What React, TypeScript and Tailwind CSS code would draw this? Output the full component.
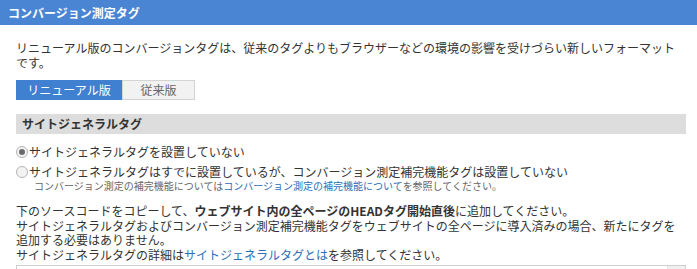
import { useState } from 'react'

const FONT = { fontFamily: '"Noto Sans CJK JP", "Noto Sans", sans-serif' }

export default function App() {
  const [tab, setTab] = useState<'new' | 'old'>('new')
  const [site, setSite] = useState<'none' | 'done'>('none')

  return (
    <div className="w-[697px] h-[269px] overflow-hidden bg-white text-[#333] text-[12px]" style={FONT}>
      <div className="h-[25px] bg-[#4a85d3] flex items-center pl-2">
        <h1 className="text-white font-bold text-[12px] leading-none">コンバージョン測定タグ</h1>
      </div>

      <div className="pl-4 pr-[11px]">
        <p className="mt-[15px] leading-[15px]">
          リニューアル版のコンバージョンタグは、従来のタグよりもブラウザーなどの環境の影響を受けづらい新しいフォーマットです。
        </p>

        <div className="mt-[10px] flex h-[20px]">
          <button
            onClick={() => setTab('new')}
            className={`w-[106px] text-[12px] leading-none ${tab === 'new' ? 'bg-[#3f80d1] text-white' : 'bg-[#f2f2f2] text-[#666] border border-[#d4d4d4]'}`}
          >
            リニューアル版
          </button>
          <button
            onClick={() => setTab('old')}
            className={`w-[73px] text-[12px] leading-none ${tab === 'old' ? 'bg-[#3f80d1] text-white' : 'bg-[#f2f2f2] text-[#666] border border-[#d4d4d4]'}`}
          >
            従来版
          </button>
        </div>

        <div className="mt-[14px] h-[20px] bg-[#dddddd] flex items-center pl-[6px]">
          <h2 className="font-bold text-[12px] leading-none">サイトジェネラルタグ</h2>
        </div>

        <div className="mt-[8px]">
          <label className="flex items-center h-[20px] cursor-pointer" onClick={() => setSite('none')}>
            <span className="w-[12px] h-[12px] rounded-full border border-[#b5b5b5] bg-[#f3f3f3] flex items-center justify-center">
              {site === 'none' && <span className="w-[6px] h-[6px] rounded-full bg-[#6b6b6b]" />}
            </span>
            <span className="ml-[1px] text-[12px]">サイトジェネラルタグを設置していない</span>
          </label>
          <label className="flex items-center h-[20px] cursor-pointer" onClick={() => setSite('done')}>
            <span className="w-[12px] h-[12px] rounded-full border border-[#b5b5b5] bg-[#f3f3f3] flex items-center justify-center">
              {site === 'done' && <span className="w-[6px] h-[6px] rounded-full bg-[#6b6b6b]" />}
            </span>
            <span className="ml-[1px] text-[12px]">
              サイトジェネラルタグはすでに設置しているが、コンバージョン測定補完機能タグは設置していない
            </span>
          </label>
          <p className="pl-[18px] -mt-[2px] text-[10px] leading-[12px] text-[#666]">
            コンバージョン測定の補完機能については
            <a href="#" className="text-[#2a6fb8]">コンバージョン測定の補完機能について</a>
            を参照してください。
          </p>
        </div>

        <div className="mt-[12px] leading-[14.5px]">
          <p>
            下のソースコードをコピーして、<b>ウェブサイト内の全ページのHEADタグ開始直後</b>に追加してください。
          </p>
          <p>
            サイトジェネラルタグおよびコンバージョン測定補完機能タグをウェブサイトの全ページに導入済みの場合、新たにタグを追加する必要はありません。
          </p>
          <p>
            サイトジェネラルタグの詳細は<a href="#" className="text-[#2a6fb8]">サイトジェネラルタグとは</a>を参照してください。
          </p>
        </div>

        <div className="mt-[3px] border-t border-l border-r border-[#cfcfcf] h-[60px] flex">
          <pre className="flex-1 pl-[20px] pt-[3px] text-[12px] leading-[15px] text-[#444]" style={{ fontFamily: '"Noto Sans CJK JP", sans-serif' }}>
            {'<script async src="https://s.yimg.jp/images/listing/tool/cv/ytag.js"></script>'}
          </pre>
          <div className="w-[18px] bg-[#f0f0f0] border-l border-[#e2e2e2]" />
        </div>
      </div>
    </div>
  )
}
